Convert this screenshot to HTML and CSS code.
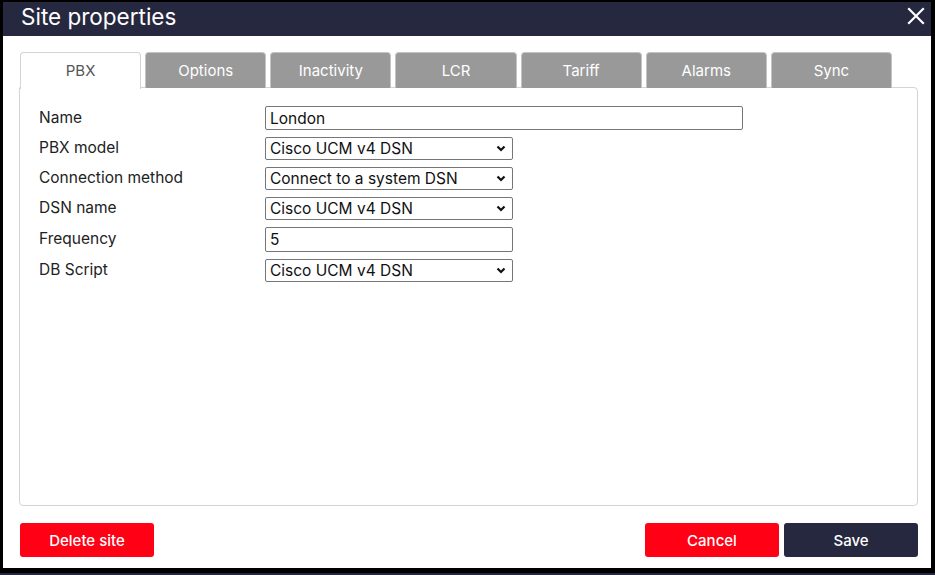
FILE: index.html
```html
<!DOCTYPE html>
<html lang="en">
<head>
<meta charset="utf-8">
<title>Site properties</title>
<link rel="stylesheet" href="styles.css">
</head>
<body>
<div class="screen">
  <div class="dialog">
    <div class="header">
      <h1 class="title">Site properties</h1>
      <button class="close" aria-label="Close">
        <svg width="18" height="18" viewBox="0 0 18 18"><path d="M2 2 L16 16 M16 2 L2 16" stroke="#fff" stroke-width="2.2" stroke-linecap="square"/></svg>
      </button>
    </div>
    <div class="body">
      <div class="tabs">
        <div class="tab active">PBX</div>
        <div class="tab">Options</div>
        <div class="tab">Inactivity</div>
        <div class="tab">LCR</div>
        <div class="tab">Tariff</div>
        <div class="tab">Alarms</div>
        <div class="tab">Sync</div>
      </div>
      <div class="panel">
        <div class="form">
          <label class="lbl">Name</label>
          <div class="field"><input class="inp wide" type="text" value="London"></div>
          <label class="lbl">PBX model</label>
          <div class="field"><select class="sel"><option>Cisco UCM v4 DSN</option></select></div>
          <label class="lbl">Connection method</label>
          <div class="field"><select class="sel"><option>Connect to a system DSN</option></select></div>
          <label class="lbl">DSN name</label>
          <div class="field"><select class="sel"><option>Cisco UCM v4 DSN</option></select></div>
          <label class="lbl">Frequency</label>
          <div class="field"><input class="inp narrow" type="text" value="5"></div>
          <label class="lbl">DB Script</label>
          <div class="field"><select class="sel"><option>Cisco UCM v4 DSN</option></select></div>
        </div>
      </div>
      <div class="footer">
        <button class="btn red">Delete site</button>
        <div class="spacer"></div>
        <button class="btn red">Cancel</button>
        <button class="btn navy">Save</button>
      </div>
    </div>
  </div>
  <div class="strip"></div>
</div>
</body>
</html>
```

FILE: styles.css
```css
html, body {
  margin: 0;
  padding: 0;
  background: #000;
}
body {
  width: 935px;
  height: 575px;
  overflow: hidden;
  font-family: Inter, "Noto Sans", "Liberation Sans", sans-serif;
}
.screen {
  width: 935px;
  height: 575px;
  display: flex;
  flex-direction: column;
  padding: 2px 4px 0 3px;
  box-sizing: border-box;
}
.dialog {
  height: 566px;
  background: #fff;
  display: flex;
  flex-direction: column;
}
.strip {
  margin-top: 5px;
  margin-left: -3px;
  margin-right: -4px;
  height: 2px;
  background: #262840;
}
.header {
  height: 34px;
  background: #262840;
  display: flex;
  align-items: center;
  padding: 0 4px 0 18px;
}
.title {
  margin: 0;
  flex: 1;
  color: #fff;
  font-weight: 400;
  font-size: 22.5px;
  line-height: 34px;
  position: relative;
  top: -2px;
}
.close {
  background: none;
  border: 0;
  padding: 0;
  width: 22px;
  height: 22px;
  display: flex;
  align-items: center;
  justify-content: center;
  position: relative;
  top: -3px;
}
.body {
  flex: 1;
  display: flex;
  flex-direction: column;
  padding: 16px 13px 10px 16px;
}
.tabs {
  display: flex;
  gap: 4px;
  margin-left: 1px;
  width: 872px;
  height: 36px;
  position: relative;
  z-index: 1;
}
.tab {
  flex: 1;
  box-sizing: border-box;
  background: #999999;
  color: #fff;
  font-size: 15px;
  display: flex;
  align-items: center;
  justify-content: center;
  border: 1px solid #c4c4c4;
  border-bottom: 0;
  border-radius: 4px 4px 0 0;
}
.tab.active {
  background: #fff;
  color: #555;
  border-color: #d4d4d4;
  height: 37px;
  padding-bottom: 1px;
}
.panel {
  height: 419px;
  box-sizing: border-box;
  border: 1px solid #d4d4d4;
  border-radius: 0 4px 4px 4px;
  padding: 18px 19px;
  margin-top: -1px;
}
.form {
  display: grid;
  grid-template-columns: 226px 1fr;
  grid-template-rows: 24px 23px 23px 23px 25px 23px;
  row-gap: 7px;
}
.lbl {
  font-size: 15.5px;
  color: #222;
  display: flex;
  align-items: center;
  position: relative;
  top: -1px;
}
.field {
  display: flex;
  align-items: stretch;
}
.inp, .sel {
  box-sizing: border-box;
  border: 1px solid #767676;
  border-radius: 2px;
  font-family: Inter, "Noto Sans", "Liberation Sans", sans-serif;
  font-size: 15.5px;
  color: #111;
  padding: 0 4px;
  margin: 0;
  background: #fff;
  outline: none;
}
.inp.wide { width: 478px; }
.inp.narrow { width: 248px; }
.sel {
  width: 248px;
  -webkit-appearance: none;
  appearance: none;
  padding-right: 20px;
  background-image: url("data:image/svg+xml;utf8,<svg xmlns='http://www.w3.org/2000/svg' width='10' height='7' viewBox='0 0 10 7'><path d='M1.5 1.5 L5 5 L8.5 1.5' fill='none' stroke='%23111' stroke-width='2.2'/></svg>");
  background-repeat: no-repeat;
  background-position: right 6px center;
}
.footer {
  margin-top: 17px;
  display: flex;
  gap: 5px;
  padding-left: 1px;
}
.spacer { flex: 1; }
.btn {
  width: 134px;
  height: 34px;
  border: 0;
  border-radius: 3px;
  color: #fff;
  font-family: Inter, "Noto Sans", "Liberation Sans", sans-serif;
  font-size: 15px;
  font-weight: 500;
  padding: 0;
}
.btn.red { background: #ff0015; }
.btn.navy { background: #262840; }
```
